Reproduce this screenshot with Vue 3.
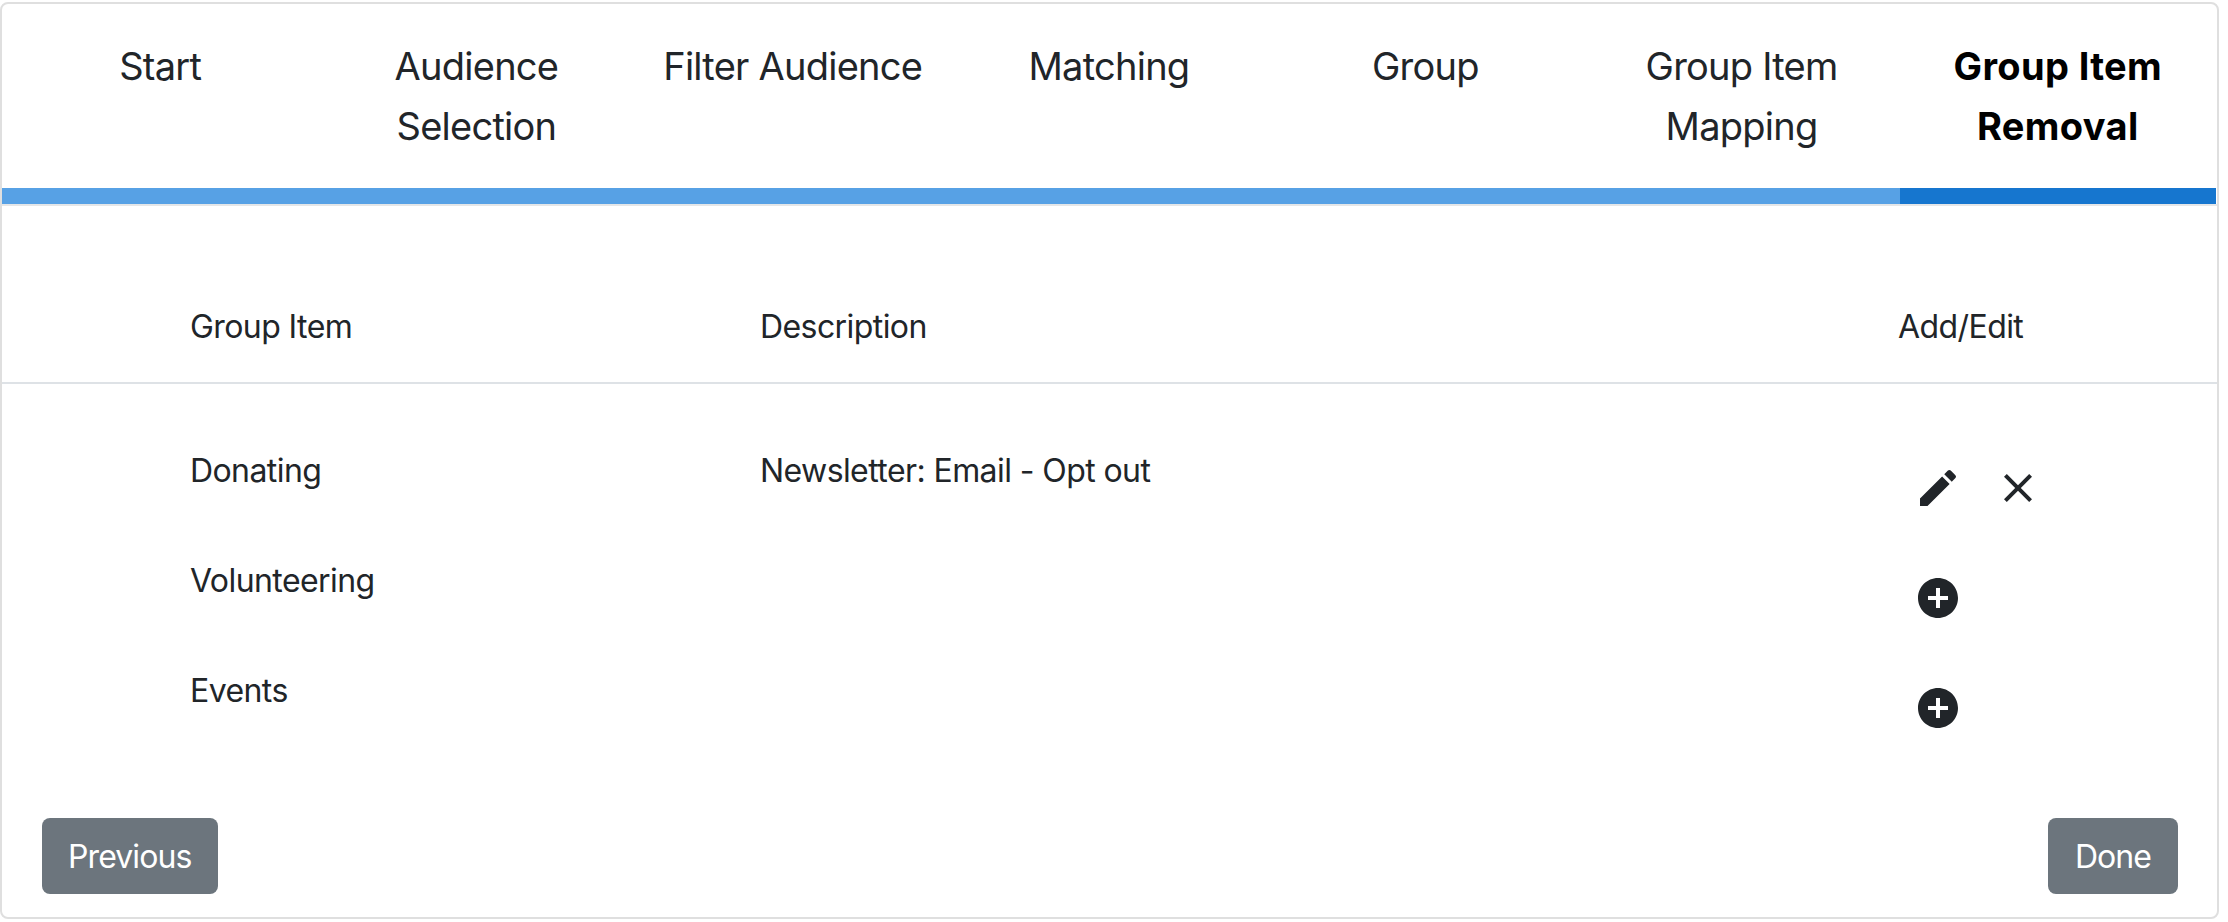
<script setup>
const steps = ['Start', 'Audience Selection', 'Filter Audience', 'Matching', 'Group', 'Group Item Mapping', 'Group Item Removal']
const rows = [
  { name: 'Donating', description: 'Newsletter: Email - Opt out', filled: true },
  { name: 'Volunteering', description: '', filled: false },
  { name: 'Events', description: '', filled: false }
]
</script>

<template>
  <div class="page">
    <section class="card">
      <ol class="steps">
        <li v-for="(s, i) in steps" :key="s" class="step" :class="{ active: i === steps.length - 1 }">
          <span class="label">{{ s }}</span>
          <span class="bar"></span>
        </li>
      </ol>
      <div class="table">
        <div class="row head">
          <div>Group Item</div>
          <div>Description</div>
          <div>Add/Edit</div>
        </div>
        <div class="body">
          <div v-for="r in rows" :key="r.name" class="row item">
            <div>{{ r.name }}</div>
            <div>{{ r.description }}</div>
            <div class="icons">
              <template v-if="r.filled">
                <svg class="icon" viewBox="0 0 24 24"><path d="M3 17.25V21h3.75L17.81 9.94l-3.75-3.75L3 17.25zM20.71 7.04a1 1 0 0 0 0-1.41l-2.34-2.34a1 1 0 0 0-1.41 0l-1.83 1.83 3.75 3.75 1.83-1.83z"/></svg>
                <svg class="icon" viewBox="0 0 24 24"><path d="M19 6.41 17.59 5 12 10.59 6.41 5 5 6.41 10.59 12 5 17.59 6.41 19 12 13.41 17.59 19 19 17.59 13.41 12z"/></svg>
              </template>
              <svg v-else class="icon" viewBox="0 0 24 24"><path d="M12 2C6.48 2 2 6.48 2 12s4.48 10 10 10 10-4.48 10-10S17.52 2 12 2zm5 11h-4v4h-2v-4H7v-2h4V7h2v4h4v2z"/></svg>
            </div>
          </div>
        </div>
      </div>
      <footer class="footer">
        <button class="btn">Previous</button>
        <button class="btn">Done</button>
      </footer>
    </section>
  </div>
</template>

<style>
html, body { margin: 0; background: #fff; }
</style>

<style scoped>
.page {
  padding: 2px 9px 3px 0;
  font-family: Inter, "Liberation Sans", sans-serif;
  color: #212529;
}
.card {
  box-sizing: border-box;
  height: 917px;
  border: 2px solid #dfdfdf;
  border-radius: 8px;
  display: flex;
  flex-direction: column;
  background: #fff;
}
.steps {
  list-style: none;
  margin: 0;
  padding: 0 1px 0 0;
  display: grid;
  grid-template-columns: repeat(7, 1fr);
  border-bottom: 2px solid #e4e6e8;
}
.step {
  display: flex;
  flex-direction: column;
  align-items: stretch;
  text-align: center;
  font-size: 38px;
  letter-spacing: -0.75px;
  line-height: 60px;
}
.label {
  box-sizing: border-box;
  height: 184px;
  padding: 32px 16px 0;
}
.bar {
  height: 16px;
  background: #57a1e5;
}
.active { color: #000; font-weight: 700; letter-spacing: 0.35px; }
.active .bar { background: #1676cf; }
.table { font-size: 32px; line-height: 48px; letter-spacing: -0.58px; }
.row {
  display: grid;
  grid-template-columns: 758px 1138px 1fr;
}
.row > div:first-child { padding-left: 188px; }
.head {
  box-sizing: border-box;
  height: 178px;
  padding-top: 97px;
  border-bottom: 2px solid #dee2e6;
}
.body { padding-top: 41px; }
.item { height: 110px; padding-top: 22px; box-sizing: border-box; }
.icons { display: flex; gap: 32px; padding: 17px 0 0 16px; }
.icon { width: 48px; height: 48px; fill: #212529; display: block; }
.footer {
  margin-top: auto;
  display: flex;
  justify-content: space-between;
  padding: 0 39px 23px 40px;
}
.btn {
  box-sizing: border-box;
  height: 76px;
  min-width: 130px;
  padding: 2px 26px 0;
  border: 0;
  border-radius: 8px;
  background: #6c757d;
  color: #fff;
  font: 400 32px/48px Inter, "Liberation Sans", sans-serif;
  letter-spacing: -0.9px;
}
</style>
